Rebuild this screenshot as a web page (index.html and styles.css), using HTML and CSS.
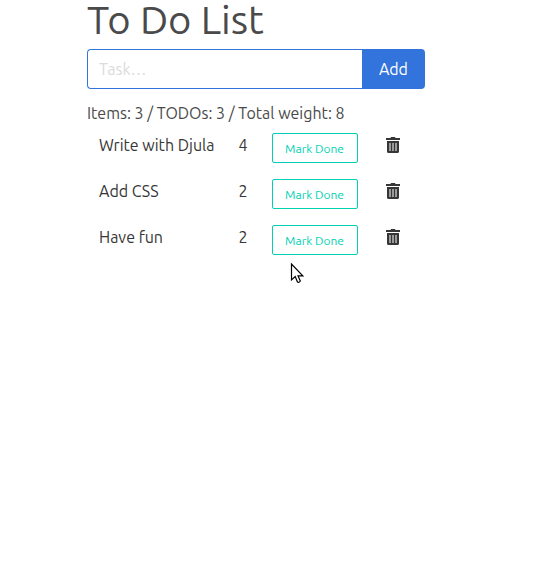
FILE: index.html
```
<!DOCTYPE html>
<html lang="en">
<head>
<meta charset="utf-8">
<title>To Do List</title>
<link rel="stylesheet" href="styles.css">
</head>
<body>
<main class="container">
  <h1 class="title">To Do List</h1>
  <form class="field">
    <input class="input" type="text" placeholder="Task…" aria-label="Task">
    <button class="add" type="submit">Add</button>
  </form>
  <p class="summary">Items: 3 / TODOs: 3 / Total weight: 8</p>
  <table class="tasks">
    <tbody>
      <tr>
        <td class="name">Write with Djula</td>
        <td class="weight">4</td>
        <td class="action"><button class="done" type="button">Mark Done</button></td>
        <td class="remove"><button class="trash" type="button" aria-label="Delete"><svg class="icon" viewBox="0 0 14 16"><use href="#trash"/></svg></button></td>
      </tr>
      <tr>
        <td class="name">Add CSS</td>
        <td class="weight">2</td>
        <td class="action"><button class="done" type="button">Mark Done</button></td>
        <td class="remove"><button class="trash" type="button" aria-label="Delete"><svg class="icon" viewBox="0 0 14 16"><use href="#trash"/></svg></button></td>
      </tr>
      <tr>
        <td class="name">Have fun</td>
        <td class="weight">2</td>
        <td class="action"><button class="done" type="button">Mark Done</button></td>
        <td class="remove"><button class="trash" type="button" aria-label="Delete"><svg class="icon" viewBox="0 0 14 16"><use href="#trash"/></svg></button></td>
      </tr>
    </tbody>
  </table>
</main>
<svg class="cursor" viewBox="0 0 14 22" aria-hidden="true">
  <path d="M1.500 2V18L5.200 14.600L7.500 20Q9 21 10.300 19L8 13.800H12.800Z" fill="#fff" stroke="#000" stroke-width="1.200"/>
</svg>
<svg class="sprite" aria-hidden="true">
  <symbol id="trash" viewBox="0 0 14 16">
    <path fill="#363636" d="M0 1H4.500L5 0H9L9.500 1H14V3H0ZM1 4H13V14.500Q13 16 11.500 16H2.500Q1 16 1 14.500Z"/>
    <path fill="#9a9a9a" d="M3 6H5V14H3ZM6 6H8V14H6ZM9 6H11V14H9Z"/>
  </symbol>
</svg>
</body>
</html>
```
FILE: styles.css
```
* { box-sizing: border-box; }
body {
  margin: 0;
  background: #fff;
  color: #4a4a4a;
  font: 16px/24px Ubuntu, "Noto Sans", "Open Sans", sans-serif;
}
.container { width: 61%; margin: 0 auto 0 87px; }
.title { margin: 0 0 9px; font-size: 40px; line-height: 40px; font-weight: 400; }
.field { display: flex; margin: 0 0 12px; }
.input {
  flex: 1;
  min-width: 0;
  height: 40px;
  padding: 0 11px;
  border: 1px solid #3273dc;
  border-right: 0;
  border-radius: 4px 0 0 4px;
  font: inherit;
}
.input::placeholder { color: #dbdbdb; opacity: 1; }
.add {
  width: 63px;
  height: 40px;
  border: 0;
  border-radius: 0 4px 4px 0;
  background: #3273dc;
  color: #fff;
  font: inherit;
}
.summary { margin: 0; }
.tasks { border-collapse: collapse; color: #363636; }
td { height: 46px; padding: 8px 12px; vertical-align: top; }
.done {
  display: block;
  width: 86px;
  height: 30px;
  padding: 2px 0 0;
  border: 1px solid #00d1b2;
  border-radius: 2px;
  background: #fff;
  color: #00d1b2;
  font: inherit;
  font-size: 12px;
}
.remove { padding: 12px 16px; }
.trash { display: block; padding: 0; border: 0; background: none; }
.icon { display: block; width: 14px; height: 16px; }
.cursor { position: absolute; left: 290px; top: 262px; width: 14px; height: 22px; }
.sprite { display: none; }
```
